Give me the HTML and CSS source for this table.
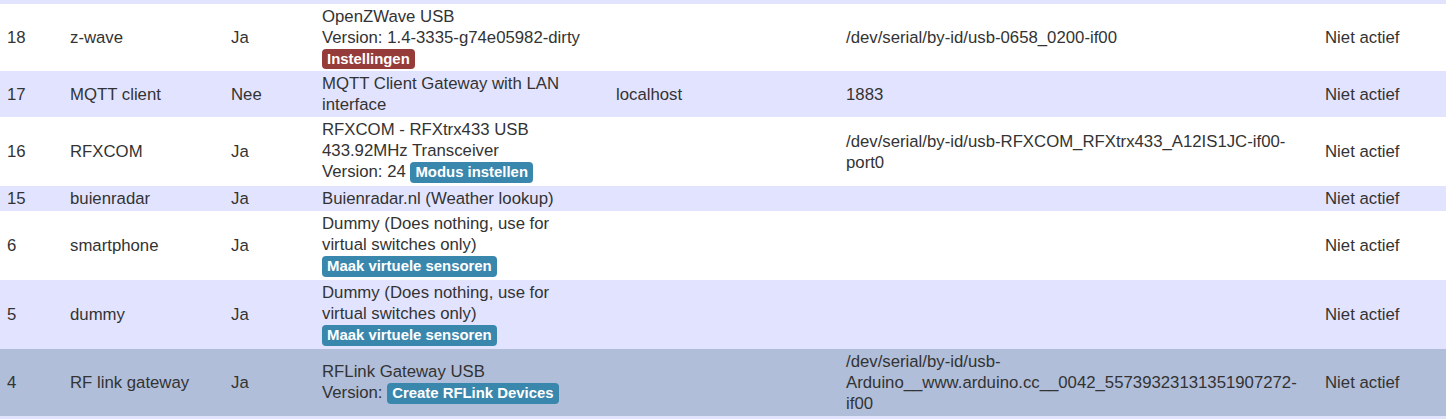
FILE: index.html
```html
<!DOCTYPE html>
<html lang="nl">
<head>
<meta charset="utf-8">
<title>Hardware</title>
<link rel="stylesheet" href="styles.css">
</head>
<body>
<div class="table-view">
  <div class="row-clip"></div>
  <table class="hw-table">
    <colgroup>
      <col class="c-id"><col class="c-name"><col class="c-enabled"><col class="c-type"><col class="c-addr"><col class="c-port"><col class="c-status">
    </colgroup>
    <tbody>
      <tr class="even">
        <td>18</td><td>z-wave</td><td>Ja</td>
        <td class="desc">OpenZWave USB<br>Version: 1.4-3335-g74e05982-dirty<br><span class="label label-red">Instellingen</span></td>
        <td></td><td>/dev/serial/by-id/usb-0658_0200-if00</td><td>Niet actief</td>
      </tr>
      <tr class="odd">
        <td>17</td><td>MQTT client</td><td>Nee</td>
        <td class="desc">MQTT Client Gateway with LAN interface</td>
        <td>localhost</td><td>1883</td><td>Niet actief</td>
      </tr>
      <tr class="even">
        <td>16</td><td>RFXCOM</td><td>Ja</td>
        <td class="desc">RFXCOM - RFXtrx433 USB 433.92MHz Transceiver<br>Version: 24 <span class="label label-blue">Modus instellen</span></td>
        <td></td><td>/dev/serial/by-id/usb-RFXCOM_RFXtrx433_A12IS1JC-if00-port0</td><td>Niet actief</td>
      </tr>
      <tr class="odd">
        <td>15</td><td>buienradar</td><td>Ja</td>
        <td class="desc">Buienradar.nl (Weather lookup)</td>
        <td></td><td></td><td>Niet actief</td>
      </tr>
      <tr class="even">
        <td>6</td><td>smartphone</td><td>Ja</td>
        <td class="desc">Dummy (Does nothing, use for virtual switches only)<br><span class="label label-blue">Maak virtuele sensoren</span></td>
        <td></td><td></td><td>Niet actief</td>
      </tr>
      <tr class="odd">
        <td>5</td><td>dummy</td><td>Ja</td>
        <td class="desc">Dummy (Does nothing, use for virtual switches only)<br><span class="label label-blue">Maak virtuele sensoren</span></td>
        <td></td><td></td><td>Niet actief</td>
      </tr>
      <tr class="selected">
        <td>4</td><td>RF link gateway</td><td>Ja</td>
        <td class="desc">RFLink Gateway USB<br>Version: <span class="label label-blue">Create RFLink Devices</span></td>
        <td></td><td>/dev/serial/by-id/usb-Arduino__www.arduino.cc__0042_55739323131351907272-if00</td><td>Niet actief</td>
      </tr>
    </tbody>
  </table>
</div>
</body>
</html>
```

FILE: styles.css
```css
html, body {
  margin: 0;
  padding: 0;
  background: #e2e4ff;
}

body {
  font-family: "Liberation Sans", Arial, sans-serif;
  font-size: 16.75px;
  line-height: 21px;
  color: #333;
}

.table-view {
  width: 1446px;
  overflow: hidden;
}

.row-clip {
  height: 4px;
  background: #e2e4ff;
}

.hw-table {
  width: 1446px;
  border-collapse: collapse;
  table-layout: fixed;
}

.c-id { width: 63px; }
.c-name { width: 161px; }
.c-enabled { width: 91px; }
.c-type { width: 294px; }
.c-addr { width: 230px; }
.c-port { width: 479px; }
.c-status { width: 128px; }

.hw-table td {
  padding: 2px 7px;
  vertical-align: middle;
  text-align: left;
  word-wrap: break-word;
}

.hw-table td.desc {
  padding-right: 22px;
}

.hw-table tr.even { background: #ffffff; }
.hw-table tr.odd { background: #e2e4ff; }
.hw-table tr.selected { background: #b0bed9; }

.label {
  display: inline;
  padding: 2px 5px;
  font-size: 14.9px;
  font-weight: bold;
  line-height: 1;
  color: #fff;
  border-radius: 4px;
  white-space: nowrap;
}

.label-red { background: #953b39; }

.label-blue {
  display: inline-block;
  margin: 1px 0;
  line-height: 17px;
  background: #3a87ad;
}
```
